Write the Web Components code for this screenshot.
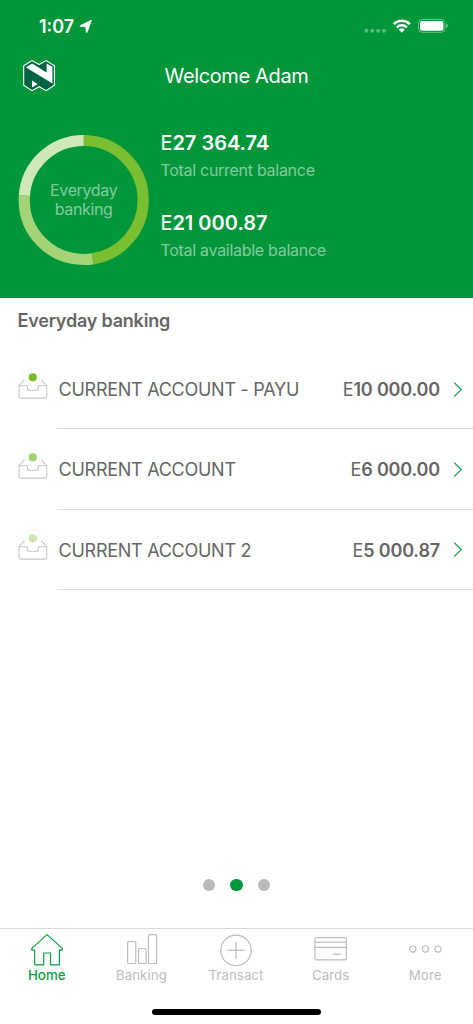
<!DOCTYPE html>
<html lang="en">
<head>
<meta charset="utf-8">
<title>Everyday banking</title>
<style>
html, body { margin: 0; background: #fff; }
body { width: 473px; height: 1024px; overflow: hidden; font-family: Inter, "Liberation Sans", sans-serif; }
</style>
</head>
<body>
<bank-app></bank-app>
<script>
function define(name, html, setup) {
  const template = document.createElement('template');
  template.innerHTML = html;
  customElements.define(name, class extends HTMLElement {
    constructor() {
      super();
      this.attachShadow({ mode: 'open' }).appendChild(template.content.cloneNode(true));
    }
    connectedCallback() { if (setup) setup(this, this.shadowRoot); }
  });
}

define('status-bar', `
<style>
:host { display: flex; height: 52px; box-sizing: border-box; padding: 0 24px 0 39px; align-items: center; color: #fff; }
.time { font-size: 18px; font-weight: 600; line-height: 24px; letter-spacing: 0; width: 36px; padding-top: 1px; }
.arrow { margin-left: 4px; }
.right { margin-left: auto; }
svg { display: block; }
</style>
<span class="time">1:07</span>
<svg class="arrow" width="15" height="16" viewBox="79 18 15 16"><path d="M91.4 20.3 80 25.7q-.3.5.3.7l5.5.4.5 5.4q.3.6.8.1z" fill="#fff" stroke="#fff" stroke-width=".8" stroke-linejoin="round"/></svg>
<svg class="right" width="86" height="20" viewBox="363 16 86 20">
<g fill="#fff" fill-opacity=".35"><circle cx="366.4" cy="30.8" r="2"/><circle cx="372.3" cy="30.8" r="2"/><circle cx="378.1" cy="30.8" r="2"/><circle cx="383.9" cy="30.8" r="2"/></g>
<g fill="none" stroke="#fff" stroke-width="2.5"><path d="M393.7 24.1a11.4 11.4 0 0 1 16.2 0"/><path d="M396.8 27.4a7 7 0 0 1 10 0"/></g>
<path d="M398.8 29.6a4.4 4.4 0 0 1 6 0l-3 3.1z" fill="#fff"/>
<rect x="418.5" y="19.5" width="26.4" height="12.8" rx="3.8" fill="none" stroke="#fff" stroke-opacity=".4"/>
<rect x="420" y="21" width="23.4" height="9.8" rx="2.4" fill="#fff"/>
<path d="M446.2 23.8q1.7.6 1.7 2.1t-1.7 2.1z" fill="#fff" fill-opacity=".45"/>
</svg>`);

define('brand-logo', `
<style>:host { display: block; width: 34px; height: 34px; } svg { display: block; }</style>
<svg width="34" height="34" viewBox="22 59 34 34">
<path d="M23.7 65.7 32 60.6l7.1 3.9 7.1-3.9 8.2 5.1v19.4L46.2 90.7l-7.1-4-7.1 4-8.3-5.6z" fill="#006341" stroke="#fff" stroke-width="1.1"/>
<path d="M25.8 67.3 32.2 63.6 46.6 72.6V63.4L52.4 66.8V83.4z" fill="#fff"/>
<path d="M32 80.2 37.6 84.3 32 87.6z" fill="#fff"/>
</svg>`);

define('nav-header', `
<style>
:host { display: grid; grid-template-columns: 34px 1fr 34px; align-items: center; height: 48px; padding: 0 22px; color: #fff; }
.title { text-align: center; font-size: 20px; line-height: 28px; font-weight: 400; letter-spacing: -.36px; }
</style>
<brand-logo></brand-logo><span class="title"><slot></slot></span>`);

define('balance-ring', `
<style>
:host { display: grid; width: 132px; height: 132px; place-items: center; color: rgba(255,255,255,.52); }
svg, .label { grid-area: 1 / 1; }
.label { font-size: 16px; line-height: 19px; font-weight: 400; letter-spacing: -.36px; text-align: center; width: 80px; }
circle { fill: none; stroke-width: 11.2; }
</style>
<svg width="132" height="132" viewBox="-65.7 -66 132 132"><g transform="rotate(-90)">
<circle r="59.5" pathLength="21000.87" stroke="#7abe31" stroke-dasharray="10000 11000.87"/>
<circle r="59.5" pathLength="21000.87" stroke="#a5d377" stroke-dasharray="6000 15000.87" stroke-dashoffset="-10000"/>
<circle r="59.5" pathLength="21000.87" stroke="#cfe8b7" stroke-dasharray="5000.87 16000" stroke-dashoffset="-16000"/>
</g></svg>
<span class="label"><slot></slot></span>`);

define('balance-total', `
<style>
:host { display: block; height: 80px; color: #fff; }
.amount { font-size: 20px; line-height: 30px; font-weight: 600; white-space: pre; }
.cur { font-weight: 400; }
.label { font-size: 16px; line-height: 24px; letter-spacing: -.28px; color: rgba(255,255,255,.52); white-space: nowrap; }
</style>
<div class="amount"><span class="cur">E</span><slot name="amount"></slot></div>
<div class="label"><slot></slot></div>`);

define('balance-summary', `
<style>
:host { display: flex; padding: 34px 0 0 17.7px; gap: 10.7px; }
.totals { margin-top: -6px; }
</style>
<balance-ring>Everyday banking</balance-ring>
<div class="totals">
<balance-total><span slot="amount">27 364.74</span>Total current balance</balance-total>
<balance-total><span slot="amount">21 000.87</span>Total available balance</balance-total>
</div>`);

define('account-row', `
<style>
:host { display: flex; height: 80.33px; color: #666; font-size: 18px; line-height: 24px; }
.icon { display: block; width: 32px; margin: 17px 8px 0 17px; flex: none; height: 34px; }
.body { flex: 1; display: flex; align-items: center; border-bottom: 1px solid #dedede; padding: 0 10px 0 1.6px; white-space: pre; }
.name, .amount { padding-top: 2.6px; letter-spacing: -.27px; }
.amount { margin-left: auto; font-weight: 600; letter-spacing: -.17px; }
.cur { font-weight: 400; }
.chev { margin-left: 13px; }
</style>
<svg class="icon" width="32" height="34" viewBox="17 366 32 34">
<g fill="none" stroke="#c6c6c6" stroke-width="1.1"><path d="M24.6 379.6 19 385.6v10.6q0 1.9 1.9 1.9h23.9q1.9 0 1.9-1.9v-10.6l-5.6-6"/><path d="M19 385.7h7.6q.8 0 .8.8v1.8q0 2 2 2h6.9q2 0 2-2v-1.8q0-.8.8-.8h7.6"/></g>
<circle cx="32.8" cy="377.3" r="8.3" fill="#fff" stroke="#f9f9f7" stroke-width=".6"/>
<circle class="dot" cx="32.8" cy="377.3" r="4.1"/>
</svg>
<div class="body"><span class="name"><slot></slot></span><span class="amount"><span class="cur">E</span><slot name="amount"></slot></span>
<svg class="chev" width="10" height="18" viewBox="0 0 10 18"><path d="M1.2 2.6 8.2 9.6 1.2 16.6" fill="none" stroke="#0fa04a" stroke-width="1.3"/></svg></div>`,
(host, root) => root.querySelector('.dot').setAttribute('fill', host.getAttribute('color')));

define('account-list', `
<style>
:host { display: block; }
h2 { margin: 0; padding: 11px 0 16px 17.5px; font-size: 18px; line-height: 24px; font-weight: 600; letter-spacing: -.21px; color: #666; }
</style>
<h2>Everyday banking</h2>
<account-row color="#78be20">CURRENT ACCOUNT - PAYU<span slot="amount">10 000.00</span></account-row>
<account-row color="#a1d26e">CURRENT ACCOUNT<span slot="amount">6 000.00</span></account-row>
<account-row color="#cbe7b0">CURRENT ACCOUNT 2<span slot="amount">5 000.87</span></account-row>`);

define('page-dots', `
<style>
:host { display: flex; justify-content: center; gap: 15.2px; height: 12.2px; }
i { width: 12.2px; height: 12.2px; border-radius: 50%; background: #b9b9b9; }
i.on { background: #009639; }
</style><i></i><i class="on"></i><i></i>`);

const icons = {
  home: '<path d="M20 4.6 4.8 18.4v1.8h2.9v14.6h9V23h6.8v11.8h8.9V20.2h2.9v-1.8z"/>',
  banking: '<rect x="5.6" y="11.6" width="8.2" height="21.9" rx="1"/><rect x="16.5" y="18.5" width="7.6" height="15" rx="1"/><rect x="26.5" y="4.7" width="8.1" height="28.8" rx="1"/>',
  transact: '<circle cx="20" cy="20.4" r="15.2"/><path d="M11.3 20.4h17.4M20 11.7v17.4"/>',
  cards: '<rect x="3.9" y="7.6" width="31.5" height="22.2" rx="2"/><path d="M3.9 12.1h31.5M3.9 17.4h31.5M21.8 24.2h8"/>',
  more: '<circle cx="6.8" cy="19.1" r="3.1"/><circle cx="19.4" cy="19.1" r="3.1"/><circle cx="32" cy="19.1" r="3.1"/>'
};
define('tab-item', `
<style>
:host { flex: 1 1 0; display: flex; flex-direction: column; align-items: center; color: #bdbdbd; font-size: 13.3px; line-height: 18px; letter-spacing: .05px; }
:host([active]) { color: #0d9c45; font-weight: 500; }
svg { display: block; width: 40px; height: 37px; margin-bottom: -1px; fill: none; stroke: currentColor; stroke-width: 1.2; stroke-linejoin: round; }
span { padding-right: 1px; }
</style>
<svg viewBox="0 0 40 37"></svg><span><slot></slot></span>`,
(host, root) => root.querySelector('svg').innerHTML = icons[host.getAttribute('icon')]);

define('tab-bar', `
<style>
:host { display: flex; flex-direction: column; height: 96px; box-sizing: border-box; border-top: 1px solid #d9d9d9; }
nav { display: flex; padding-top: 1px; }
.home { width: 169px; height: 6px; border-radius: 3px; background: #000; margin: auto auto 9.5px 152px; }
</style>
<nav>
<tab-item icon="home" active>Home</tab-item>
<tab-item icon="banking">Banking</tab-item>
<tab-item icon="transact">Transact</tab-item>
<tab-item icon="cards">Cards</tab-item>
<tab-item icon="more">More</tab-item>
</nav>
<div class="home"></div>`);

define('bank-app', `
<style>
:host { display: flex; flex-direction: column; width: 473px; height: 1024px; }
header { height: 298px; background: #009639; }
page-dots { margin: auto 0 37px; }
</style>
<header><status-bar></status-bar><nav-header>Welcome Adam</nav-header><balance-summary></balance-summary></header>
<account-list></account-list>
<page-dots></page-dots>
<tab-bar></tab-bar>`);
</script>
</body>
</html>
